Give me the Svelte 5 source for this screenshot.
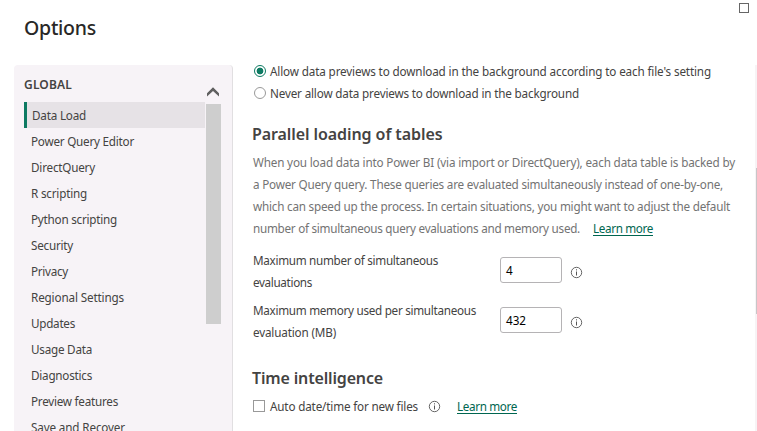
<script>
  const items = [
    ['Data Load', 54], ['Power Query Editor', 103], ['DirectQuery', 64], ['R scripting', 56],
    ['Python scripting', 86], ['Security', 42], ['Privacy', 37], ['Regional Settings', 93],
    ['Updates', 44], ['Usage Data', 61], ['Diagnostics', 61], ['Preview features', 87],
    ['Save and Recover', 94]
  ];
  const description = [
    ['When you load data into Power BI (via import or DirectQuery), each data table is backed by', 482],
    ['a Power Query query. These queries are evaluated simultaneously instead of one-by-one,', 470],
    ['which can speed up the process. In certain situations, you might want to adjust the default', 477],
    ['number of simultaneous query evaluations and memory used.', 327]
  ];
  const fields = [
    { label: [['Maximum number of simultaneous', 185], ['evaluations', 59]], value: '4' },
    { label: [['Maximum memory used per simultaneous', 223], ['evaluation (MB)', 83]], value: '432' }
  ];

  // Spreads the letters of a label evenly so that it fills the given width.
  function fit(node, width) {
    const natural = node.getBoundingClientRect().width;
    node.style.letterSpacing = `${(width - natural) / node.textContent.length}px`;
  }
</script>

{#snippet info()}
  <svg class="info" width="13" height="13" viewBox="0 0 13 13" aria-hidden="true">
    <circle cx="6.5" cy="6.5" r="5.2" fill="none" stroke="#555" stroke-width="0.9" />
    <path d="M6.5 5.5V9.5M6.5 3.3V4.4" stroke="#555" stroke-width="1" />
  </svg>
{/snippet}

<div class="dialog">
  <header>
    <h1><span use:fit={72}>Options</span></h1>
    <span class="maximize"></span>
  </header>
  <div class="body">
    <nav>
      <h2><span use:fit={48}>GLOBAL</span></h2>
      <div class="navrow">
        <ul>
          {#each items as [name, width], i}
            <li class:active={i === 0}><span use:fit={width}>{name}</span></li>
          {/each}
        </ul>
        <div class="scroll">
          <svg width="15" height="16" viewBox="0 0 15 16"><path d="M1 6.2L7 0.2L13 6.2V9.4L7 4L1 9.4Z" fill="#606060" /></svg>
          <div class="thumb"></div>
        </div>
      </div>
    </nav>
    <main>
      <div class="choice"><i class="radio on"></i><span use:fit={441}>Allow data previews to download in the background according to each file's setting</span></div>
      <div class="choice"><i class="radio"></i><span use:fit={309}>Never allow data previews to download in the background</span></div>
      <h3 class="first"><span use:fit={190.5}>Parallel loading of tables</span></h3>
      <div class="desc">
        {#each description as [text, width], i}
          <div class="line"><span use:fit={width}>{text}</span>{#if i === 3}<a href="#parallel"><span use:fit={60}>Learn more</span></a>{/if}</div>
        {/each}
      </div>
      {#each fields as field}
        <div class="field">
          <div class="label">
            {#each field.label as [text, width]}
              <div class="line"><span use:fit={width}>{text}</span></div>
            {/each}
          </div>
          <div class="input">{field.value}</div>
          {@render info()}
        </div>
      {/each}
      <h3 class="second"><span use:fit={131}>Time intelligence</span></h3>
      <div class="choice auto"><i class="check"></i><span use:fit={148}>Auto date/time for new files</span>{@render info()}<a href="#time"><span use:fit={60}>Learn more</span></a></div>
    </main>
    <div class="rail"><div></div></div>
  </div>
</div>

<style>
  :global(body) { margin: 0; overflow: hidden; }
  .dialog {
    width: 757px; height: 431px; overflow: hidden; background: #fff; color: #444342;
    display: flex; flex-direction: column; box-sizing: border-box;
    font: 11.7px/22px "Noto Sans", "Open Sans", sans-serif;
  }
  span { white-space: nowrap; }
  h1, h2, h3, ul { margin: 0; padding: 0; }
  header { height: 65px; flex: none; display: flex; justify-content: space-between; }
  h1 { font-size: 19.5px; line-height: 28px; font-weight: 500; padding: 14px 0 0 24px; color: #292827; }
  .maximize { width: 8px; height: 8px; box-sizing: content-box; border: 1px solid #666; margin: 3px 8px 0 0; }
  .body { display: flex; height: 366px; }
  nav {
    width: 219px; margin-left: 14px; box-sizing: border-box; flex: none; overflow: hidden;
    background: #f7f3f7; border-right: 1px solid #e1dfe1; border-radius: 4px 4px 0 0;
  }
  h2 { font-size: 12px; line-height: 22px; font-weight: 600; padding: 9px 0 0 10px; height: 28px; box-sizing: border-box; }
  .navrow { display: flex; }
  ul { list-style: none; width: 181px; margin: 9px 0 0 10px; }
  li { height: 26px; line-height: 26px; padding-left: 7px; }
  li.active { background: #e6e2e6; border-left: 3px solid #0d7a62; padding-left: 5px; }
  .scroll { width: 15px; margin: -6px 0 0 1px; }
  .scroll svg { display: block; }
  .thumb { height: 220px; background: #cecece; margin-top: 1px; }
  main { width: 503px; padding: 0 0 0 19px; margin-top: -5px; flex: none; }
  .choice { display: flex; height: 22px; align-items: center; }
  .choice i { flex: none; box-sizing: border-box; margin-right: 4px; }
  .radio { width: 12px; height: 12px; border: 1px solid #999; border-radius: 50%; margin-left: 2px; }
  .radio.on { border: 1.5px solid #0d7a62; background: radial-gradient(circle, #0d7a62 3.1px, #fff 3.7px); }
  .check { width: 12px; height: 12px; border: 1px solid #999; margin-left: 1px; }
  .choice .check { margin-right: 5px; }
  h3 { font-size: 16px; line-height: 24px; font-weight: 600; color: #444342; }
  .first { margin-top: 18px; margin-bottom: 5px; }
  .desc { color: #737373; padding-left: 1px; }
  .line { height: 22px; line-height: 22px; display: flex; }
  a { color: #006650; text-decoration: underline; text-underline-offset: 2px; }
  .desc a { margin-left: 13px; }
  .field { display: flex; height: 50px; padding-left: 1px; }
  .desc + .field { margin-top: 10px; }
  .label { width: 247px; flex: none; }
  .input {
    width: 62px; height: 26px; line-height: 25px; box-sizing: border-box; margin-top: 8px;
    border: 1px solid #b5b3b5; border-radius: 3px; padding-left: 5px; color: #000;
  }
  .info { flex: none; display: block; }
  .field .info { margin: 17px 0 0 8px; }
  .second { margin-top: 17px; margin-bottom: 5px; }
  .auto .info { margin: 1px 16px 0 10px; }
  .rail { width: 2px; flex: none; background: #f7f3f5; padding-top: 103px; box-sizing: border-box; display: flex; justify-content: flex-end; }
  .rail div { width: 1px; height: 146px; background: #c8c6c8; }
</style>
